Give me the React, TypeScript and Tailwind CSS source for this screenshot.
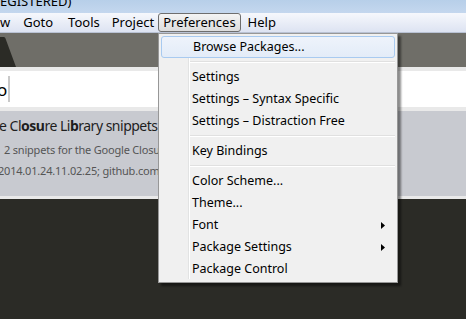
import React from 'react';

const font = { fontFamily: '"Noto Sans", "Liberation Sans", sans-serif' };

type Item = { label: string; sub?: boolean; sep?: boolean; hover?: boolean };

const items: Item[] = [
  { label: 'Browse Packages...', hover: true },
  { label: '', sep: true },
  { label: 'Settings' },
  { label: 'Settings – Syntax Specific' },
  { label: 'Settings – Distraction Free' },
  { label: '', sep: true },
  { label: 'Key Bindings' },
  { label: '', sep: true },
  { label: 'Color Scheme...' },
  { label: 'Theme...' },
  { label: 'Font', sub: true },
  { label: 'Package Settings', sub: true },
  { label: 'Package Control' },
];

const PreferencesMenu: React.FC = () => (
  <div className="absolute left-[158px] top-[33px] w-[240px] border border-[#979797] bg-[#f0f0f0] py-[2px] pl-[2px] pr-[2px] shadow-[3px_3px_2px_rgba(0,0,0,0.45)]">
    {/* icon gutter line */}
    <div className="absolute left-[29px] top-[3px] bottom-[3px] w-[2px] border-l border-[#e2e3e3] bg-white" />
    {items.map((it, i) =>
      it.sep ? (
        <div key={i} className="relative h-[8px] flex items-center pl-[29px]">
          <div className="w-full h-[2px] border-t border-[#e0e0e0] bg-white" />
        </div>
      ) : (
        <div
          key={i}
          className={`relative h-[22px] flex items-center pl-[31px] pr-[8px] text-[12.5px] text-black ${
            it.hover ? 'rounded-[3px] border border-[#a8caf0] bg-gradient-to-b from-[#eef3fb] to-[#e3ecf8] pl-[30px]' : ''
          }`}
        >
          <span className="flex-1 whitespace-nowrap">{it.label}</span>
          {it.sub && (
            <svg width="4" height="7" viewBox="0 0 4 7" className="mr-[2px]">
              <path d="M0 0 L4 3.5 L0 7 Z" fill="#000" />
            </svg>
          )}
        </div>
      ),
    )}
  </div>
);

const App: React.FC = () => {
  return (
    <div className="relative w-[466px] h-[319px] overflow-hidden bg-[#2b2b26] flex flex-col" style={font}>
      {/* title bar */}
      <div className="h-[13px] bg-gradient-to-b from-[#b7cfe9] to-[#c4d7ee] overflow-hidden">
        <div className="mt-[-8px] text-[13px] text-black whitespace-nowrap leading-[18px]">EGISTERED)</div>
      </div>

      {/* menu bar */}
      <div className="h-[20px] bg-gradient-to-b from-[#f6f8fc] to-[#dde3f2] border-b border-[#b9c2d4] flex items-center text-[13px] text-black whitespace-nowrap">
        <span className="ml-[0px]">w</span>
        <span className="ml-[13px]">Goto</span>
        <span className="ml-[15px]">Tools</span>
        <span className="ml-[12px]">Project</span>
        <span className="ml-[4px] h-[19px] px-[4px] flex items-center rounded-[3px] border border-[#6e6e6e] bg-gradient-to-b from-[#f4f4f4] to-[#dcdcdc]">
          Preferences
        </span>
        <span className="ml-[7px]">Help</span>
      </div>

      {/* tab bar */}
      <div className="h-[34px] bg-[#6f6e68] relative">
        <svg width="20" height="34" viewBox="0 0 20 34" className="absolute left-0 top-0">
          <path d="M0 4 L4 4 Q5 4 5.5 5.5 L16 34 L0 34 Z" fill="#2b2b26" />
        </svg>
      </div>

      <div className="h-[4px] bg-[#e9e9e9]" />

      {/* input */}
      <div className="h-[36px] bg-white flex items-center">
        <span className="ml-[-3px] text-[17px] text-black leading-none">o</span>
        <div className="ml-[1px] w-[2px] h-[26px] bg-[#c9c9c9]" />
      </div>

      <div className="h-[4px] bg-[#e9e9e9]" />

      {/* selected result */}
      <div className="h-[85px] bg-[#c8cad0] pt-[5px] whitespace-nowrap">
        <div className="ml-[-1px] text-[14px] tracking-[-0.5px] text-[#1e1e1e] leading-[20px]">
          e Cl<b>osu</b>re Li<b>b</b>rary snippets
        </div>
        <div className="mt-[6px] ml-[4px] text-[11px] tracking-[-0.2px] text-[#555] leading-[16px]">
          2 snippets for the Google Closure Library
        </div>
        <div className="mt-[5px] ml-[-2px] text-[11px] tracking-[-0.2px] text-[#555] leading-[16px]">
          2014.01.24.11.02.25; github.com/closure
        </div>
      </div>

      <div className="h-[3px] bg-[#e9e9e9]" />
      <div className="flex-1 bg-[#2b2b26]" />

      <PreferencesMenu />
    </div>
  );
};

export default App;
